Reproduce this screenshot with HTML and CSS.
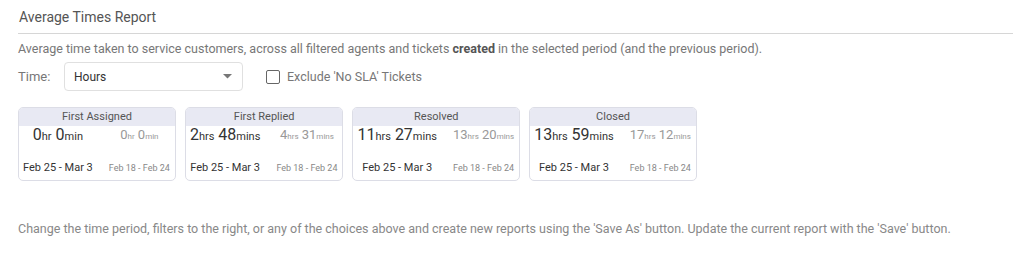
FILE: index.html
```html
<!DOCTYPE html>
<html lang="en">
<head>
    <meta charset="UTF-8">
    <title>Average Times Report</title>
    <link rel="stylesheet" href="styles.css">
</head>
<body>
    <div class="report">
        <h2 class="report-title">Average Times Report</h2>
        <p class="report-desc">Average time taken to service customers, across all filtered agents and tickets <b>created</b> in the selected period (and the previous period).</p>

        <div class="controls">
            <label class="time-label">Time:</label>
            <div class="select">
                <span>Hours</span>
                <svg width="9" height="5" viewBox="0 0 9 5"><path d="M0 0h9L4.5 4.5z" fill="#777"/></svg>
            </div>
            <label class="check">
                <span class="box"></span>
                Exclude 'No SLA' Tickets
            </label>
        </div>

        <div class="cards">
            <div class="card">
                <div class="card-head">First Assigned</div>
                <div class="card-body">
                    <div class="col">
                        <div class="val">0<small>hr</small> 0<small>min</small></div>
                        <div class="date">Feb 25 - Mar 3</div>
                    </div>
                    <div class="col prev">
                        <div class="val">0<small>hr</small> 0<small>min</small></div>
                        <div class="date">Feb 18 - Feb 24</div>
                    </div>
                </div>
            </div>
            <div class="card">
                <div class="card-head">First Replied</div>
                <div class="card-body">
                    <div class="col">
                        <div class="val">2<small>hrs</small> 48<small>mins</small></div>
                        <div class="date">Feb 25 - Mar 3</div>
                    </div>
                    <div class="col prev">
                        <div class="val">4<small>hrs</small> 31<small>mins</small></div>
                        <div class="date">Feb 18 - Feb 24</div>
                    </div>
                </div>
            </div>
            <div class="card">
                <div class="card-head">Resolved</div>
                <div class="card-body">
                    <div class="col">
                        <div class="val">11<small>hrs</small> 27<small>mins</small></div>
                        <div class="date">Feb 25 - Mar 3</div>
                    </div>
                    <div class="col prev">
                        <div class="val">13<small>hrs</small> 20<small>mins</small></div>
                        <div class="date">Feb 18 - Feb 24</div>
                    </div>
                </div>
            </div>
            <div class="card">
                <div class="card-head">Closed</div>
                <div class="card-body">
                    <div class="col">
                        <div class="val">13<small>hrs</small> 59<small>mins</small></div>
                        <div class="date">Feb 25 - Mar 3</div>
                    </div>
                    <div class="col prev">
                        <div class="val">17<small>hrs</small> 12<small>mins</small></div>
                        <div class="date">Feb 18 - Feb 24</div>
                    </div>
                </div>
            </div>
        </div>

        <p class="footer-note">Change the time period, filters to the right, or any of the choices above and create new reports using the 'Save As' button. Update the current report with the 'Save' button.</p>
    </div>
</body>
</html>
```

FILE: styles.css
```css
body {
    font-family: Roboto, "Noto Sans", sans-serif;
    background-color: #fff;
    margin: 0;
    padding: 0;
}

.report {
    padding: 8px 11px 0 18px;
}

.report-title {
    font-size: 14px;
    font-weight: normal;
    color: #555;
    margin: 0;
    padding: 0 0 7px 1px;
    line-height: 18px;
    border-bottom: 1px solid #d6d6d6;
}

.report-desc {
    font-size: 12.5px;
    color: #777;
    margin: 7px 0 0;
    line-height: 16px;
}

.report-desc b {
    color: #555;
}

.controls {
    display: flex;
    align-items: center;
    margin-top: 5px;
}

.time-label {
    font-size: 13px;
    color: #777;
    width: 46px;
}

.select {
    width: 179px;
    height: 29px;
    box-sizing: border-box;
    border: 1px solid #e0e0e0;
    border-radius: 4px;
    display: flex;
    align-items: center;
    justify-content: space-between;
    padding: 0 10px 0 9px;
    font-size: 12px;
    color: #333;
}

.check {
    display: flex;
    align-items: center;
    margin-left: 23px;
    font-size: 12.5px;
    color: #777;
}

.box {
    width: 12px;
    height: 12px;
    border: 1px solid #666;
    border-radius: 2px;
    margin-right: 7px;
}

.cards {
    display: flex;
    gap: 9px;
    margin-top: 16px;
}

.card {
    border: 1px solid #dcdde6;
    border-radius: 5px;
    overflow: hidden;
}

.card-head {
    background-color: #e8e9f3;
    text-align: center;
    font-size: 11px;
    color: #555;
    line-height: 18px;
}

.card-body {
    display: flex;
    gap: 16px;
    padding: 0 5px 5px 4px;
}

.col {
    text-align: center;
}

.val {
    font-size: 16px;
    color: #333;
    line-height: 16px;
    margin-top: 1px;
    white-space: nowrap;
}

.val small {
    font-size: 11px;
}

.date {
    font-size: 11px;
    color: #333;
    line-height: 14px;
    margin-top: 16px;
    white-space: nowrap;
}

.prev .val {
    font-size: 13px;
    color: #999;
}

.prev .val small {
    font-size: 8px;
}

.prev .date {
    font-size: 9px;
    color: #888;
}

.footer-note {
    font-size: 12.5px;
    color: #888;
    margin: 40px 0 0;
}
```
